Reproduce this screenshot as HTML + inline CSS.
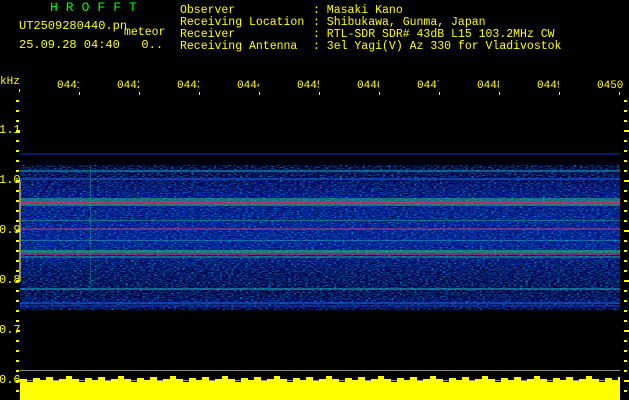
<!DOCTYPE html>
<html><head><meta charset="utf-8"><style>
body{margin:0;width:629px;height:400px;background:#000;overflow:hidden;position:relative;font-family:"Liberation Mono",monospace;}
.t{position:absolute;color:#ff0;font-size:11.5px;line-height:12px;white-space:pre;}
.g{color:#0f0}
.lb{position:absolute;color:#ff0;font-size:11px;line-height:12px;white-space:pre;overflow:hidden;width:22px;top:80px}
.yl{position:absolute;color:#ff0;font-size:12px;left:-1px;width:17px;line-height:12px;z-index:2}
</style></head><body>
<div class="t g" style="left:50px;top:2px;font-size:13px;letter-spacing:8px">HROFFT</div>
<div class="t" style="left:19px;top:20px;font-size:12px">UT2509280440.pn</div>
<div class="t" style="left:124px;top:27px;font-size:11.5px">meteor</div>
<div class="t" style="left:19px;top:39px;font-size:12px">25.09.28 04:40   0..</div>
<div class="t" style="left:180px;top:5px">Observer
Receiving Location
Receiver
Receiving Antenna</div>
<div class="t" style="left:313px;top:5px">: Masaki Kano
: Shibukawa, Gunma, Japan
: RTL-SDR SDR# 43dB L15 103.2MHz CW
: 3el Yagi(V) Az 330 for Vladivostok</div>
<div class="t" style="left:0;top:76px;font-size:11px">kHz</div>
<div class="lb" style="left:57px">0441</div><div class="lb" style="left:117px">0442</div><div class="lb" style="left:177px">0443</div><div class="lb" style="left:237px">0444</div><div class="lb" style="left:297px">0445</div><div class="lb" style="left:357px">0446</div><div class="lb" style="left:417px">0447</div><div class="lb" style="left:477px">0448</div><div class="lb" style="left:537px">0449</div><div class="lb" style="left:597px;width:28px">0450</div>
<div class="yl" style="top:124px">1.1</div><div class="yl" style="top:174px">1.0</div><div class="yl" style="top:224px">0.9</div><div class="yl" style="top:274px">0.8</div><div class="yl" style="top:324px">0.7</div><div class="yl" style="top:374px">0.6</div>
<svg style="position:absolute;left:0;top:0" width="629" height="400">
<defs>
<filter id="n" x="0" y="0" width="100%" height="100%"><feTurbulence type="fractalNoise" baseFrequency="0.35 1.2" numOctaves="1" seed="3"/><feColorMatrix type="matrix" values="0 0 0 0 0  2 0 0 0 -1.0  0 0 0 0 1  4 0 0 0 -1.7"/></filter>
<filter id="d" x="0" y="0" width="100%" height="100%"><feTurbulence type="fractalNoise" baseFrequency="0.5 1.5" numOctaves="1" seed="9"/><feColorMatrix type="matrix" values="0 0 0 0 0  0 0 0 0 0  0 0 0 0 0  4 0 0 0 -1.6"/></filter>
<linearGradient id="bg" x1="0" y1="0" x2="0" y2="1">
<stop offset="0" stop-color="#000"/><stop offset="0.1" stop-color="#000010"/><stop offset="0.18" stop-color="#000850"/><stop offset="0.3" stop-color="#001890"/><stop offset="0.45" stop-color="#0024a0"/><stop offset="0.6" stop-color="#0024a8"/><stop offset="0.75" stop-color="#001060"/><stop offset="0.88" stop-color="#000840"/><stop offset="0.95" stop-color="#000c70"/><stop offset="1" stop-color="#000"/>
</linearGradient>
</defs>
<rect x="20" y="148" width="600" height="164" fill="url(#bg)"/>
<rect x="20" y="165" width="600" height="145" filter="url(#d)" opacity="0.6"/>
<rect x="20" y="165" width="600" height="145" filter="url(#n)" opacity="0.6"/>
<g opacity="0.75">
<rect x="20" y="153" width="600" height="2" fill="#1030c0" opacity="0.7"/>
<rect x="20" y="170" width="600" height="2" fill="#10a0d0" opacity="0.7"/>
<rect x="20" y="178" width="600" height="2" fill="#2060e0" opacity="0.7"/>
<rect x="20" y="198" width="600" height="3" fill="#30c080" opacity="0.7"/>
<rect x="20" y="201" width="600" height="3" fill="#f03070"/>
<rect x="20" y="204" width="600" height="2" fill="#40c060" opacity="0.7"/>
<rect x="20" y="220" width="600" height="1" fill="#30c0a0" opacity="0.6"/>
<rect x="20" y="228" width="600" height="2" fill="#e04090" opacity="0.6"/>
<rect x="20" y="240" width="600" height="1" fill="#30c0c0" opacity="0.6"/>
<rect x="20" y="250" width="600" height="3" fill="#40d070" opacity="0.7"/>
<rect x="20" y="253" width="600" height="2" fill="#e03080" opacity="0.8"/>
<rect x="20" y="256" width="600" height="2" fill="#30b0a0" opacity="0.6"/>
<rect x="20" y="288" width="600" height="2" fill="#20b0c0" opacity="0.7"/>
<rect x="20" y="302" width="600" height="2" fill="#2060e0" opacity="0.7"/>
<rect x="20" y="305" width="600" height="2" fill="#1040c0" opacity="0.6"/>
<rect x="90" y="165" width="1" height="120" fill="#30c090" opacity="0.5"/>
</g>
<rect x="19" y="181" width="2" height="100" fill="#888"/>
<rect x="20" y="370" width="600" height="1" fill="#888"/>
<rect x="20" y="380" width="600" height="1" fill="#888"/>
<svg x="20" y="370" width="600" height="30">
<path fill="#ff0" d="M0 30V9h7v3h6v-4h7v2h6v-3h7v4h6v-2h7v-3h6v3h7v3h6v-4h7v2h6v-3h7v4h6v-2h7v-3h6v3h7v3h6v-4h7v2h6v-3h7v4h6v-2h7v-3h6v3h7v3h6v-4h7v2h6v-3h7v4h6v-2h7v-3h6v3h7v3h6v-4h7v2h6v-3h7v4h6v-2h7v-3h6v3h7v3h6v-4h7v2h6v-3h7v4h6v-2h7v-3h6v3h7v3h6v-4h7v2h6v-3h7v4h6v-2h7v-3h6v3h7v3h6v-4h7v2h6v-3h7v4h6v-2h7v-3h6v3h7v3h6v-4h7v2h6v-3h7v4h6v-2h7v-3h6v3h7v3h6v-4h7v2h6v-3h7v4h6v-2h7v-3h6v3h7v3h6v-4h7v2h6v-3h7v4h6v-2h7v-3h6v3h7v3h6v-4h7v2h6v-3h7v4h6v-2h7v-3h6v3h7v3h6v-4h7v2h6v-3h7v4h6v-2h7v-3h6v3H640V30z"/>
</svg>
<g fill="#ff0">
<rect x="16" y="100" width="3" height="2"/><rect x="16" y="110" width="3" height="2"/><rect x="16" y="120" width="3" height="2"/><rect x="16" y="130" width="4" height="2"/><rect x="16" y="140" width="3" height="2"/><rect x="16" y="150" width="3" height="2"/><rect x="16" y="160" width="3" height="2"/><rect x="16" y="170" width="3" height="2"/><rect x="16" y="180" width="4" height="2"/><rect x="16" y="190" width="3" height="2"/><rect x="16" y="200" width="3" height="2"/><rect x="16" y="210" width="3" height="2"/><rect x="16" y="220" width="3" height="2"/><rect x="16" y="230" width="4" height="2"/><rect x="16" y="240" width="3" height="2"/><rect x="16" y="250" width="3" height="2"/><rect x="16" y="260" width="3" height="2"/><rect x="16" y="270" width="3" height="2"/><rect x="16" y="280" width="4" height="2"/><rect x="16" y="290" width="3" height="2"/><rect x="16" y="300" width="3" height="2"/><rect x="16" y="310" width="3" height="2"/><rect x="16" y="320" width="3" height="2"/><rect x="16" y="330" width="4" height="2"/><rect x="16" y="340" width="3" height="2"/><rect x="16" y="350" width="3" height="2"/><rect x="16" y="360" width="3" height="2"/><rect x="16" y="370" width="3" height="2"/><rect x="16" y="380" width="4" height="2"/><rect x="16" y="390" width="3" height="2"/>
<rect x="624" y="100" width="3" height="2"/><rect x="624" y="110" width="3" height="2"/><rect x="624" y="120" width="3" height="2"/><rect x="624" y="130" width="5" height="2"/><rect x="624" y="140" width="3" height="2"/><rect x="624" y="150" width="3" height="2"/><rect x="624" y="160" width="3" height="2"/><rect x="624" y="170" width="3" height="2"/><rect x="624" y="180" width="5" height="2"/><rect x="624" y="190" width="3" height="2"/><rect x="624" y="200" width="3" height="2"/><rect x="624" y="210" width="3" height="2"/><rect x="624" y="220" width="3" height="2"/><rect x="624" y="230" width="5" height="2"/><rect x="624" y="240" width="3" height="2"/><rect x="624" y="250" width="3" height="2"/><rect x="624" y="260" width="3" height="2"/><rect x="624" y="270" width="3" height="2"/><rect x="624" y="280" width="5" height="2"/><rect x="624" y="290" width="3" height="2"/><rect x="624" y="300" width="3" height="2"/><rect x="624" y="310" width="3" height="2"/><rect x="624" y="320" width="3" height="2"/><rect x="624" y="330" width="5" height="2"/><rect x="624" y="340" width="3" height="2"/><rect x="624" y="350" width="3" height="2"/><rect x="624" y="360" width="3" height="2"/><rect x="624" y="370" width="3" height="2"/><rect x="624" y="380" width="5" height="2"/><rect x="624" y="390" width="3" height="2"/>
<rect x="19" y="89" width="1" height="3"/><rect x="79" y="92" width="1" height="3"/><rect x="139" y="92" width="1" height="3"/><rect x="199" y="92" width="1" height="3"/><rect x="259" y="92" width="1" height="3"/><rect x="319" y="92" width="1" height="3"/><rect x="379" y="92" width="1" height="3"/><rect x="439" y="92" width="1" height="3"/><rect x="499" y="92" width="1" height="3"/><rect x="559" y="92" width="1" height="3"/><rect x="619" y="92" width="1" height="3"/>
</g>
</svg>
</body></html>
